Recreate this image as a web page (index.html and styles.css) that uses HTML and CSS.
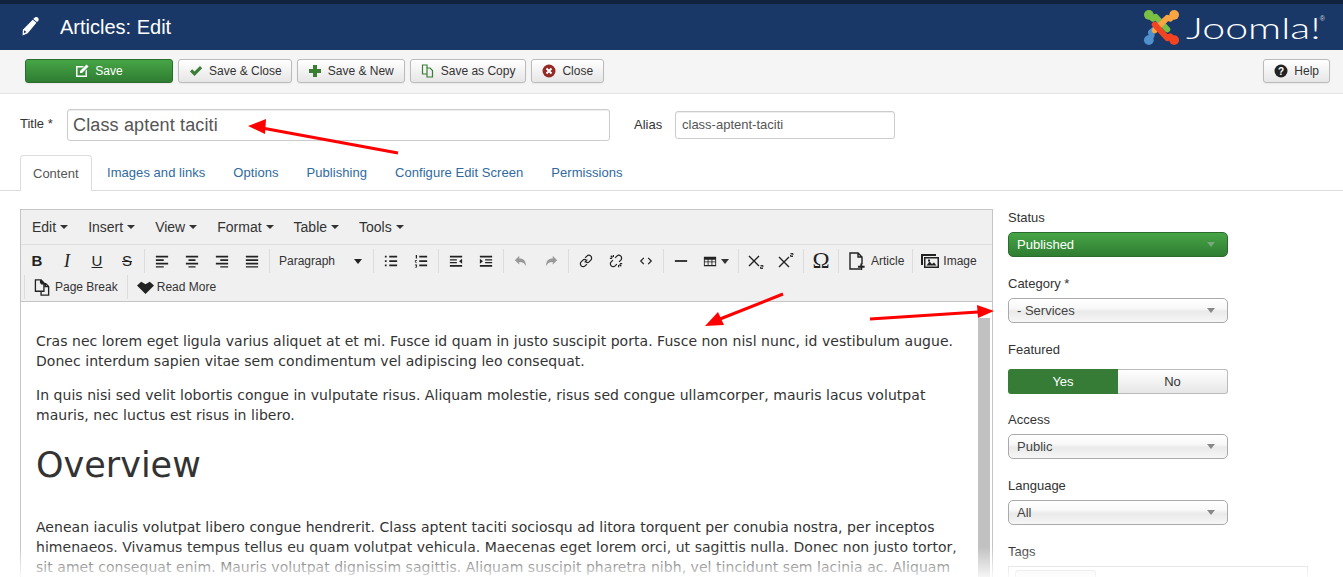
FILE: index.html
```html
<!DOCTYPE html>
<html lang="en">
<head>
<meta charset="utf-8">
<title>Articles: Edit</title>
<link rel="stylesheet" href="styles.css">
</head>
<body>
<header class="topbar">
  <div class="brand">
    <svg class="ico-pencil" viewBox="0 0 24 24"><path d="M17.500 1.200c1.500-1 3.300-.6 4.300.8s.7 3.200-.7 4.200l-1 .8-4.700-4zM14.800 4l4.700 4L8.500 21 2 24l.3-7.300zM4 17.500l-.4 3.600 3.300-1.600z" fill-rule="evenodd"/></svg>
    <h1 class="page-title">Articles: Edit</h1>
  </div>
  <div class="logo">
    <svg class="logo-mark" viewBox="0 0 38 38">
      <g fill="none" stroke-width="6" stroke-linecap="round" stroke-linejoin="round">
        <path stroke="#7ac143" d="M6 6l4 4 3-2 12 13"/>
        <path stroke="#5091cd" d="M6 32l3-5-1-3 14-12"/>
        <path stroke="#f9a541" d="M32 6l-4 4-3-1-13 13"/>
        <path stroke="#f44321" d="M32 32l-4-4-3 2-13-14"/>
      </g>
      <circle cx="6" cy="6" r="5" fill="#7ac143"/><circle cx="32" cy="6" r="5" fill="#f9a541"/>
      <circle cx="32" cy="32" r="5" fill="#f44321"/><circle cx="6" cy="32" r="5" fill="#5091cd"/>
    </svg>
    <span class="logo-text">Joomla!</span><span class="logo-reg">®</span>
  </div>
</header>

<nav class="actions">
  <button class="btn btn-save"><svg class="i" viewBox="0 0 14 14"><path fill="#fff" d="M1 2h8L7.500 3.500H2.500v8h8V7L12 5.500V13H1zM11.500.5l2 2L7 9H5V7z"/></svg>Save</button>
  <button class="btn btn-tight"><svg class="i" viewBox="0 0 14 14"><path fill="#3b7d35" d="M1 7.500l2.200-2.200 2.300 2.300L11 2l2.200 2.200-7.700 7.800z"/></svg>Save &amp; Close</button>
  <button class="btn"><svg class="i" viewBox="0 0 14 14"><path fill="#3b7d35" d="M5 1h4v4h4v4H9v4H5V9H1V5h4z"/></svg>Save &amp; New</button>
  <button class="btn"><svg class="i" viewBox="0 0 14 14"><path fill="none" stroke="#3b7d35" stroke-width="1.200" d="M1.500 1h4.500v9H1.500zM6 4h3l2.500 2.500V13H6z"/></svg>Save as Copy</button>
  <button class="btn"><svg class="i" viewBox="0 0 14 14"><circle cx="7" cy="7" r="6.500" fill="#942a25"/><path stroke="#fff" stroke-width="2" d="M4.500 4.500l5 5M9.500 4.500l-5 5"/></svg>Close</button>
  <button class="btn btn-help"><svg class="i" viewBox="0 0 14 14"><circle cx="7" cy="7" r="6.500" fill="#222"/><text x="7" y="10.500" class="q">?</text></svg>Help</button>
</nav>

<section class="titles">
  <label class="lbl-title">Title *</label>
  <input class="in-title" value="Class aptent taciti">
  <label class="lbl-alias">Alias</label>
  <input class="in-alias" value="class-aptent-taciti">
</section>

<ul class="tabs">
  <li class="tab active">Content</li>
  <li class="tab">Images and links</li>
  <li class="tab">Options</li>
  <li class="tab">Publishing</li>
  <li class="tab">Configure Edit Screen</li>
  <li class="tab">Permissions</li>
</ul>

<main class="columns">
  <section class="editor">
    <div class="menubar">
      <span class="menu">Edit<i class="caret"></i></span>
      <span class="menu">Insert<i class="caret"></i></span>
      <span class="menu">View<i class="caret"></i></span>
      <span class="menu">Format<i class="caret"></i></span>
      <span class="menu">Table<i class="caret"></i></span>
      <span class="menu">Tools<i class="caret"></i></span>
    </div>
    <div class="toolrow">
      <div class="group first">
        <span class="tb b">B</span><span class="tb it">I</span><span class="tb un">U</span><span class="tb st">S</span>
      </div>
      <div class="group">
        <span class="tb"><svg class="t" viewBox="0 0 16 16"><path d="M1 2h14v2H1zM1 6h9v2H1zM1 10h14v2H1zM1 14h9v1.500H1z"/></svg></span>
        <span class="tb"><svg class="t" viewBox="0 0 16 16"><path d="M1 2h14v2H1zM4 6h8v2H4zM1 10h14v2H1zM4 14h8v1.500H4z"/></svg></span>
        <span class="tb"><svg class="t" viewBox="0 0 16 16"><path d="M1 2h14v2H1zM6 6h9v2H6zM1 10h14v2H1zM6 14h9v1.500H6z"/></svg></span>
        <span class="tb"><svg class="t" viewBox="0 0 16 16"><path d="M1 2h14v2H1zM1 6h14v2H1zM1 10h14v2H1zM1 14h14v1.500H1z"/></svg></span>
      </div>
      <div class="group">
        <span class="listbox">Paragraph<i class="caret big"></i></span>
      </div>
      <div class="group">
        <span class="tb"><svg class="t" viewBox="0 0 16 16"><path d="M1 2h2v2H1zM6 2h9v2H6zM1 7h2v2H1zM6 7h9v2H6zM1 12h2v2H1zM6 12h9v2H6z"/></svg></span>
        <span class="tb"><svg class="t" viewBox="0 0 16 16"><path d="M6 2h9v2H6zM6 7h9v2H6zM6 12h9v2H6zM2 1h1.500v4H2zM1 7h2.500v1H2v1h1.500v.7H1zM1 12h2.500v3.500H1v-.7h1.500v-.7H1.500v-.6h1v-.7H1z"/></svg></span>
      </div>
      <div class="group">
        <span class="tb"><svg class="t" viewBox="0 0 16 16"><path d="M1 2h14v2H1zM1 6h8v1.500H1zM1 9h8v1.500H1zM1 12.500h14v2H1zM15 5.500v5.500l-3.500-2.700z"/></svg></span>
        <span class="tb"><svg class="t" viewBox="0 0 16 16"><path d="M1 2h14v2H1zM7 6h8v1.500H7zM7 9h8v1.500H7zM1 12.500h14v2H1zM1 5.500v5.500l3.500-2.700z"/></svg></span>
      </div>
      <div class="group">
        <span class="tb"><svg class="t muted" viewBox="0 0 16 16"><path d="M6 2v3c5 0 8 3 7.500 9-1-3.500-3.500-5-7.500-5v3L1 7z"/></svg></span>
        <span class="tb"><svg class="t muted" viewBox="0 0 16 16"><path d="M10 2v3c-5 0-8 3-7.500 9 1-3.500 3.500-5 7.500-5v3l5-5z"/></svg></span>
      </div>
      <div class="group">
        <span class="tb"><svg class="t line" viewBox="0 0 16 16"><path d="M6.500 9.500l3-3M7 4.500l2-2a2.700 2.700 0 0 1 4.500 4.500l-2 2a2.700 2.700 0 0 1-3.500.2M9 11.500l-2 2a2.700 2.700 0 0 1-4.500-4.500l2-2a2.700 2.700 0 0 1 3.500-.2"/></svg></span>
        <span class="tb"><svg class="t line" viewBox="0 0 16 16"><path d="M7 4.500l2-2a2.700 2.700 0 0 1 4.500 4.500l-2 2M9 11.500l-2 2a2.700 2.700 0 0 1-4.500-4.500l2-2M1 5h2.500M5 1v2.500M11 15v-2.500M15 11h-2.500M2 2l2 2M14 14l-2-2"/></svg></span>
        <span class="tb"><svg class="t line" viewBox="0 0 16 16"><path d="M5.500 4.500L2 8l3.500 3.500M10.500 4.500L14 8l-3.500 3.500"/></svg></span>
      </div>
      <div class="group">
        <span class="tb"><svg class="t" viewBox="0 0 16 16"><path d="M1 7h14v2H1z"/></svg></span>
        <span class="tb tb-table"><svg class="t" viewBox="0 0 16 16"><path d="M1 3h14v11H1zM2 6.500v2h3.300v-2zM6.300 6.500v2h3.400v-2zM10.700 6.500v2H14v-2zM2 9.500v3h3.300v-3zM6.300 9.500v3h3.400v-3zM10.700 9.500v3H14v-3z" fill-rule="evenodd"/></svg><i class="caret big"></i></span>
      </div>
      <div class="group">
        <span class="tb"><svg class="t t-x line" viewBox="0 0 16 16"><path d="M1 3l10 10M11 3L1 13"/><path class="thin" d="M12.500 12.500h2.500v1.500h-2.500v1.500h2.500"/></svg></span>
        <span class="tb"><svg class="t t-x line" viewBox="0 0 16 16"><path d="M1 4l10 10M11 4L1 14"/><path class="thin" d="M12.500 .5h2.500v1.500h-2.500v1.500h2.500"/></svg></span>
      </div>
      <div class="group">
        <span class="tb omega">Ω</span>
      </div>
      <div class="group">
        <span class="tb tb-text tb-article"><svg class="t big" viewBox="0 0 18 18"><path class="outline" d="M12 17H2V1h8l4 4v7M10 1v4h4"/><path d="M13 12h2v2.500h2.500v2H15V19h-2v-2.500h-2.500v-2H13z" transform="scale(.95)"/></svg>Article</span>
      </div>
      <div class="group">
        <span class="tb tb-text tb-image"><svg class="t big" viewBox="0 0 18 16"><path d="M0 1h15v2H2v9H0zM3 4h15v11H3zM4.500 5.500v8h12v-8zM5.500 12.500l3-4 2.500 2.500 2-1.500 2.500 3zM7 6.500h2v2H7z" fill-rule="evenodd"/></svg>Image</span>
      </div>
    </div>
    <div class="toolrow second">
      <div class="group">
        <span class="tb tb-text tb-break"><svg class="t big" viewBox="0 0 18 18"><path class="outline" d="M1.500 1h6l3 3v9h-9zM7.500 5h5l3 3v9h-8v-4M7 1v3h3.500M12 5v3h3.500"/></svg>Page Break</span>
      </div>
      <div class="group">
        <span class="tb tb-text tb-more"><svg class="t big" viewBox="0 0 16 16"><path d="M4 2.500l4 2.500 4-2.500 4 3.500-8 8-8-8z"/></svg>Read More</span>
      </div>
    </div>
    <article class="body">
      <div class="scroll-thumb"></div>
      <p>Cras nec lorem eget ligula varius aliquet at et mi. Fusce id quam in justo suscipit porta. Fusce non nisl nunc, id vestibulum augue. Donec interdum sapien vitae sem condimentum vel adipiscing leo consequat.</p>
      <p>In quis nisi sed velit lobortis congue in vulputate risus. Aliquam molestie, risus sed congue ullamcorper, mauris lacus volutpat mauris, nec luctus est risus in libero.</p>
      <h2>Overview</h2>
      <p>Aenean iaculis volutpat libero congue hendrerit. Class aptent taciti sociosqu ad litora torquent per conubia nostra, per inceptos himenaeos. Vivamus tempus tellus eu quam volutpat vehicula. Maecenas eget lorem orci, ut sagittis nulla. Donec non justo tortor, sit amet consequat enim. Mauris volutpat dignissim sagittis. Aliquam suscipit pharetra nibh, vel tincidunt sem lacinia ac. Aliquam</p>
    </article>
  </section>

  <aside class="side">
    <div class="field"><label>Status</label><div class="sel sel-green">Published<i class="caret big"></i></div></div>
    <div class="field"><label>Category *</label><div class="sel">- Services<i class="caret big"></i></div></div>
    <div class="field field-toggle"><label>Featured</label>
      <div class="toggle"><span class="yes">Yes</span><span class="no">No</span></div></div>
    <div class="field"><label>Access</label><div class="sel">Public<i class="caret big"></i></div></div>
    <div class="field"><label>Language</label><div class="sel">All<i class="caret big"></i></div></div>
    <div class="field"><label>Tags</label><div class="tagsbox"><span class="tagchip"></span></div></div>
  </aside>
</main>

<svg class="arrows" viewBox="0 0 1343 577">
  <g fill="#f00" stroke="#f00">
    <path stroke-width="3" d="M398 153L262 128"/><path stroke="none" d="M248 126l18-7-1 15z"/>
    <path stroke-width="3" d="M783 294L720 319"/><path stroke="none" d="M705 326l13-14 6 13z"/>
    <path stroke-width="3" d="M870 319L978 312"/><path stroke="none" d="M994 311l-17-6 1 13z"/>
  </g>
</svg>
<div class="fade"></div>
</body>
</html>
```
FILE: styles.css
```css
* { box-sizing: border-box; }
html, body { height: 577px; overflow: hidden; }
body { margin: 0; background: #fff; color: #333; font: 13px/18px "Liberation Sans", Arial, sans-serif; position: relative; }

/* header */
.topbar { height: 50px; background: #1a3867; border-top: 4px solid #10223e; display: flex; justify-content: space-between; padding: 0 18px 0 21px; }
.brand { display: flex; align-items: center; height: 46px; }
.ico-pencil { width: 19px; height: 20px; fill: #fff; margin-right: 20px; margin-top: -2px; }
.page-title { margin: 0; font: 400 20px/24px "Liberation Sans", sans-serif; color: #fff; }
.logo { display: flex; align-items: flex-start; color: #fff; }
.logo-mark { width: 37px; height: 37px; margin-top: 5px; margin-right: 6px; }
.logo-text { display: inline-block; width: 131px; font: 300 30px/46px Lato, sans-serif; white-space: nowrap; transform: scaleX(1.37); transform-origin: left center; }
.logo-reg { font: 400 7px/10px "Liberation Sans", sans-serif; margin-top: 10px; margin-left: 3px; color: #c8d0dc; }

/* action bar */
.actions { height: 44px; background: #f5f5f5; border-bottom: 1px solid #e5e5e5; display: flex; align-items: flex-start; gap: 5px; padding: 9px 13px 0 25px; }
.btn { height: 24px; padding: 0 10px; display: inline-flex; align-items: center; font: 12px/18px "Liberation Sans", sans-serif; color: #333; background: linear-gradient(#fff, #e6e6e6); border: 1px solid #bbb; border-radius: 3px; box-shadow: 0 1px 2px rgba(0,0,0,.05); }
.btn-tight { padding-right: 9px; }
.i { width: 14px; height: 14px; margin-right: 6px; flex: none; }
.q { font: 700 10px "Liberation Sans", sans-serif; fill: #fff; text-anchor: middle; }
.btn-save { width: 148px; justify-content: center; color: #fff; background: linear-gradient(#46a546, #2f7d32); border-color: #2b6b2e; }
.btn-help { margin-left: auto; }

/* title row */
.titles { display: flex; align-items: center; height: 61px; padding: 0 0 0 20px; }
.lbl-title { width: 47px; margin-top: -2px; color: #333; }
.in-title, .in-alias { border: 1px solid #ccc; border-radius: 3px; background: #fff; color: #555; font-family: "Liberation Sans", sans-serif; box-shadow: inset 0 1px 1px rgba(0,0,0,.075); }
.in-title { width: 543px; height: 32px; padding: 0 5px; font-size: 18px; letter-spacing: .15px; margin-top: 1px; }
.lbl-alias { width: 41px; margin-left: 24px; }
.in-alias { width: 220px; height: 28px; padding: 0 6px; font-size: 13px; }

/* tabs */
.tabs { list-style: none; margin: 0; padding: 0 0 0 20px; display: flex; height: 36px; border-bottom: 1px solid #ddd; }
.tab { padding: 0 14px; line-height: 35px; height: 35px; color: #2f6aa0; letter-spacing: .05px; }
.tab.active { width: 72px; height: 36px; margin-right: 1px; color: #555; background: #fff; border: 1px solid #ddd; border-bottom: 0; border-radius: 4px 4px 0 0; padding: 0 12px; letter-spacing: 0; }

/* columns */
.columns { display: flex; align-items: flex-start; height: 386px; overflow: hidden; padding: 18px 0 0 20px; gap: 15px; }

/* editor */
.editor { width: 973px; height: 400px; border: 1px solid #c5c5c5; background: #fff; flex: none; }
.menubar { height: 35px; background: #f0f0f0; border-bottom: 1px solid #dedede; display: flex; align-items: center; padding: 0 0 1px 11px; gap: 20px; font: 14px/18px "Liberation Sans", sans-serif; color: #333; }
.menu { display: inline-flex; align-items: center; }
.caret { display: inline-block; width: 0; height: 0; border: 4px solid transparent; border-top-color: #333; border-bottom: 0; margin-left: 4px; }
.caret.big { border-width: 5px 4.500px 0; }
.toolrow { display: flex; background: #f0f0f0; height: 30px; padding-top: 4px; align-items: flex-start; }
.toolrow.second { height: 27px; padding: 0 0 0 3px; border-bottom: 1px solid #c5c5c5; }
.group { display: flex; align-items: center; height: 24px; padding: 0 2px; border-left: 1px solid #dcdcdc; }
.group.first { border-left: 0; padding-left: 1px; }
.tb { width: 30px; height: 24px; display: inline-flex; align-items: center; justify-content: center; font: 15px/24px "Liberation Sans", sans-serif; color: #222; }
.b { font-weight: 700; font-size: 15px; }
.it { font-style: italic; font-family: "Liberation Serif", serif; font-size: 18px; }
.un { text-decoration: underline; }
.st { text-decoration: line-through; }
.t { width: 14px; height: 14px; fill: #222; flex: none; }
.t.big { width: 17px; height: 17px; }
.t.t-x { width: 16px; height: 16px; }
.t.muted { fill: #999; }
.t.line, .outline { fill: none; stroke: #222; stroke-width: 1.400; }
.thin { stroke-width: .9; }
.listbox { width: 99px; padding: 0 9px 0 7px; display: flex; align-items: center; justify-content: space-between; font: 12px/18px "Liberation Sans", sans-serif; color: #333; }
.listbox .caret { border-top-color: #222; }
.tb-table { width: 40px; justify-content: flex-start; padding-left: 7px; }
.omega { font-family: "Liberation Serif", serif; font-size: 23px; }
.tb-text { width: auto; justify-content: flex-start; font: 12px/18px "Liberation Sans", sans-serif; color: #333; }
.tb-text .t { margin-right: 4px; }
.tb-article { padding: 0 6px 0 7px; }
.tb-article .t.big { width: 18px; height: 18px; margin-right: 5px; }
.tb-image { padding: 0 6px; }
.tb-image .t.big { width: 18px; height: 18px; }
.tb-break { padding: 0 7px; }
.tb-more { padding: 0 7px; }
.tb-more .t.big { margin-right: 3px; }
.body { position: relative; height: 280px; padding: 29px 25px 0 15px; font: 14px/20px "DejaVu Sans", Verdana, sans-serif; color: #333; overflow: hidden; letter-spacing: .04px; }
.body p { margin: 0 0 14px; }
.body h2 { margin: 0 0 30px; font: 400 35px/44px "DejaVu Sans", Verdana, sans-serif; letter-spacing: 0; padding-top: 4px; }
.scroll-thumb { position: absolute; right: 2px; top: 16px; bottom: 0; width: 12px; background: #c1c1c1; }

/* sidebar */
.side { width: 300px; flex: none; }
.field { height: 66px; }
.field-toggle { height: 70px; }
.field label { display: block; height: 18px; line-height: 18px; margin-bottom: 5px; }
.field-toggle label { margin-bottom: 10px; }
.sel { width: 220px; height: 25px; display: flex; align-items: center; justify-content: space-between; padding: 0 12px 0 8px; border: 1px solid #aaa; border-radius: 5px; background: linear-gradient(#fff 0, #f8f8f8 40%, #eaeaea 55%, #f6f6f6 100%); color: #444; }
.sel .caret { border-top-color: #888; }
.sel-green { color: #fff; background: linear-gradient(#46a546, #2f7d32); border-color: #2b6b2e; }
.sel-green .caret { border-top-color: #7aa87a; }
.toggle { display: flex; width: 220px; height: 25px; }
.yes, .no { width: 110px; display: flex; align-items: center; justify-content: center; }
.yes { background: #377c36; color: #fff; border-radius: 3px 0 0 3px; }
.no { background: linear-gradient(#fff, #e6e6e6); border: 1px solid #bbb; border-left: 0; border-radius: 0 3px 3px 0; }
.tagsbox { width: 300px; height: 40px; border: 1px solid #ccc; padding: 3px 6px; }
.tagchip { display: block; width: 81px; height: 20px; border: 1px solid #ccc; border-radius: 3px; background: #f4f4f4; }

/* annotation layer */
.arrows { position: absolute; inset: 0; width: 1343px; height: 577px; pointer-events: none; }
.fade { position: absolute; left: 0; right: 0; bottom: 0; height: 30px; background: linear-gradient(rgba(255,255,255,0), rgba(255,255,255,.85)); pointer-events: none; }
```
